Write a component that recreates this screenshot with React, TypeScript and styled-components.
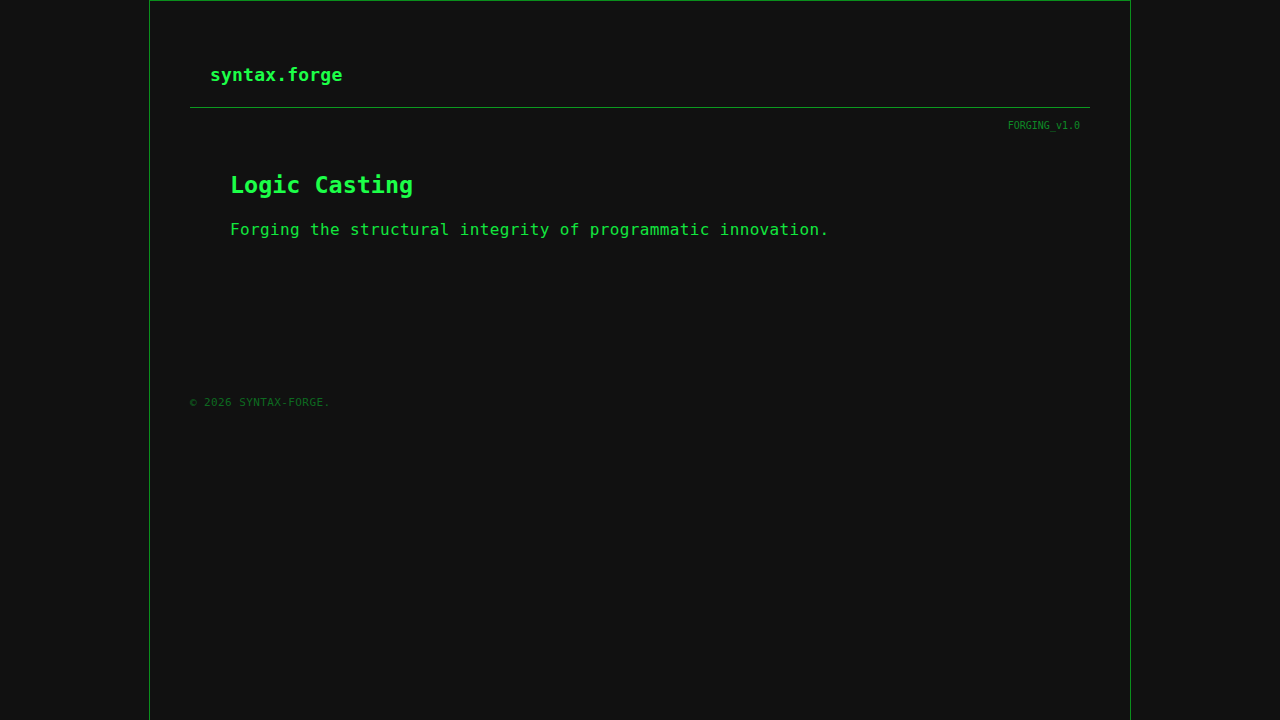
import styled, { createGlobalStyle } from "styled-components"

const GlobalStyle = createGlobalStyle`
    html, body {
        margin: 0;
        padding: 0;
        background-color: #111111;
        font-family: "DejaVu Sans Mono", "Liberation Mono", monospace;
    }
`

const Frame = styled.div`
    box-sizing: border-box;
    width: 982px;
    min-height: 720px;
    margin: 0 auto;
    padding: 40px;
    border: 1px solid #0a8f1c;
    border-bottom: none;
    background-color: #111111;
`

const Header = styled.header`
    padding: 21px 20px 19px;
    border-bottom: 1px solid #0c9a20;
`

const Brand = styled.div`
    font-size: 18px;
    line-height: 26px;
    font-weight: bold;
    color: #1cff48;
    letter-spacing: 0.2px;
`

const Version = styled.div`
    margin-top: 10px;
    padding-right: 10px;
    text-align: right;
    font-size: 10px;
    line-height: 15px;
    color: #0e8a26;
`

const Hero = styled.section`
    padding: 38px 40px 40px;
`

const Title = styled.h1`
    margin: 0 0 18px;
    font-size: 23.4px;
    line-height: 29px;
    font-weight: bold;
    color: #1cff48;
`

const Tagline = styled.p`
    margin: 0;
    font-size: 16px;
    line-height: 24px;
    color: #12e63e;
    letter-spacing: 0.36px;
`

const Footer = styled.footer`
    margin-top: 113px;
    font-size: 11px;
    line-height: 16px;
    color: #0d6a20;
    letter-spacing: 0.4px;
`

export default function App() {
    return (
        <>
            <GlobalStyle />
            <Frame>
                <Header>
                    <Brand>syntax.forge</Brand>
                </Header>
                <Version>FORGING_v1.0</Version>
                <Hero>
                    <Title>Logic Casting</Title>
                    <Tagline>Forging the structural integrity of programmatic innovation.</Tagline>
                </Hero>
                <Footer>© 2026 SYNTAX-FORGE.</Footer>
            </Frame>
        </>
    )
}
